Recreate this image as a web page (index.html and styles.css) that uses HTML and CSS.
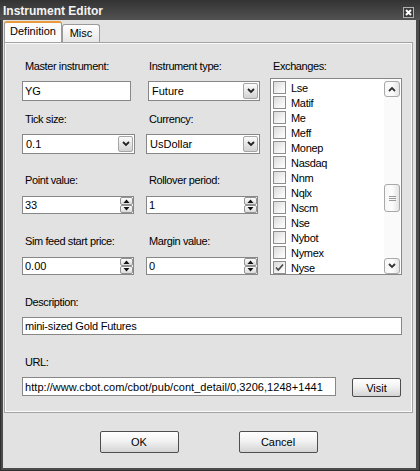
FILE: index.html
```html
<!DOCTYPE html>
<html>
<head>
<meta charset="utf-8">
<title>Instrument Editor</title>
<link rel="stylesheet" href="styles.css">
</head>
<body>
<div class="window">
  <div class="titlebar">
    <span class="title">Instrument Editor</span>
    <span class="close"><svg width="11" height="11" viewBox="0 0 11 11"><rect x="0.5" y="0.5" width="10" height="10" fill="#3a3a3a" stroke="#b0b0b0"/><path d="M3 3 L8 8 M8 3 L3 8" stroke="#fff" stroke-width="2"/></svg></span>
  </div>
  <div class="client">
    <div class="tabs">
      <div class="tab active">Definition</div>
      <div class="tab">Misc</div>
    </div>
    <div class="panel">
      <div class="top">
        <div class="fields">
          <div class="field">
            <div class="lbl">Master instrument:</div>
            <div class="textbox w109 g8">YG</div>
          </div>
          <div class="field">
            <div class="lbl">Instrument type:</div>
            <div class="select w112 g8 shift2"><span class="val">Future</span><span class="drop"><svg width="8" height="6" viewBox="0 0 8 6"><path d="M1 1 L4 4 L7 1" stroke="#222" stroke-width="1.8" fill="none"/></svg></span></div>
          </div>
          <div class="field">
            <div class="lbl">Tick size:</div>
            <div class="select w113 g8"><span class="val">0.1</span><span class="drop"><svg width="8" height="6" viewBox="0 0 8 6"><path d="M1 1 L4 4 L7 1" stroke="#222" stroke-width="1.8" fill="none"/></svg></span></div>
          </div>
          <div class="field">
            <div class="lbl">Currency:</div>
            <div class="select w114 g8"><span class="val">UsDollar</span><span class="drop"><svg width="8" height="6" viewBox="0 0 8 6"><path d="M1 1 L4 4 L7 1" stroke="#222" stroke-width="1.8" fill="none"/></svg></span></div>
          </div>
          <div class="field">
            <div class="lbl">Point value:</div>
            <div class="spin w112 g9"><span class="val">33</span><span class="arrows"><span class="ab"><svg width="7" height="4" viewBox="0 0 7 4"><path d="M0.5 4 L3.5 0.5 L6.5 4 Z" fill="#111"/></svg></span><span class="ab"><svg width="7" height="4" viewBox="0 0 7 4"><path d="M0.5 0 L3.5 3.5 L6.5 0 Z" fill="#111"/></svg></span></span></div>
          </div>
          <div class="field">
            <div class="lbl">Rollover period:</div>
            <div class="spin w112 g9"><span class="val">1</span><span class="arrows"><span class="ab"><svg width="7" height="4" viewBox="0 0 7 4"><path d="M0.5 4 L3.5 0.5 L6.5 4 Z" fill="#111"/></svg></span><span class="ab"><svg width="7" height="4" viewBox="0 0 7 4"><path d="M0.5 0 L3.5 3.5 L6.5 0 Z" fill="#111"/></svg></span></span></div>
          </div>
          <div class="field">
            <div class="lbl">Sim feed start price:</div>
            <div class="spin w112 g9"><span class="val">0.00</span><span class="arrows"><span class="ab"><svg width="7" height="4" viewBox="0 0 7 4"><path d="M0.5 4 L3.5 0.5 L6.5 4 Z" fill="#111"/></svg></span><span class="ab"><svg width="7" height="4" viewBox="0 0 7 4"><path d="M0.5 0 L3.5 3.5 L6.5 0 Z" fill="#111"/></svg></span></span></div>
          </div>
          <div class="field">
            <div class="lbl">Margin value:</div>
            <div class="spin w112 g9"><span class="val">0</span><span class="arrows"><span class="ab"><svg width="7" height="4" viewBox="0 0 7 4"><path d="M0.5 4 L3.5 0.5 L6.5 4 Z" fill="#111"/></svg></span><span class="ab"><svg width="7" height="4" viewBox="0 0 7 4"><path d="M0.5 0 L3.5 3.5 L6.5 0 Z" fill="#111"/></svg></span></span></div>
          </div>
        </div>
        <div class="exchanges">
          <div class="lbl">Exchanges:</div>
          <div class="listbox">
            <div class="items">
              <div class="item"><span class="cb"></span>Lse</div>
              <div class="item"><span class="cb"></span>Matif</div>
              <div class="item"><span class="cb"></span>Me</div>
              <div class="item"><span class="cb"></span>Meff</div>
              <div class="item"><span class="cb"></span>Monep</div>
              <div class="item"><span class="cb"></span>Nasdaq</div>
              <div class="item"><span class="cb"></span>Nnm</div>
              <div class="item"><span class="cb"></span>Nqlx</div>
              <div class="item"><span class="cb"></span>Nscm</div>
              <div class="item"><span class="cb"></span>Nse</div>
              <div class="item"><span class="cb"></span>Nybot</div>
              <div class="item"><span class="cb"></span>Nymex</div>
              <div class="item"><span class="cb checked"><svg width="11" height="11" viewBox="0 0 11 11"><path d="M2 5.5 L4.3 8 L9 2.5" stroke="#4a4a4a" stroke-width="1.7" fill="none"/></svg></span>Nyse</div>
            </div>
            <div class="scrollbar">
              <div class="sb-btn"><svg width="8" height="6" viewBox="0 0 8 6"><path d="M1 5 L4 2 L7 5" stroke="#333" stroke-width="1.8" fill="none"/></svg></div>
              <div class="sb-track"><div class="sb-thumb"><svg width="7" height="7" viewBox="0 0 7 7"><path d="M0 1.5 H7 M0 3.5 H7 M0 5.5 H7" stroke="#9a9a9a" stroke-width="1"/></svg></div></div>
              <div class="sb-btn"><svg width="8" height="6" viewBox="0 0 8 6"><path d="M1 1 L4 4 L7 1" stroke="#333" stroke-width="1.8" fill="none"/></svg></div>
            </div>
          </div>
        </div>
      </div>
      <div class="lbl mt20">Description:</div>
      <div class="textbox desc g8">mini-sized Gold Futures</div>
      <div class="lbl mt20">URL:</div>
      <div class="urlrow">
        <div class="textbox url">http://www.cbot.com/cbot/pub/cont_detail/0,3206,1248+1441</div>
        <div class="btn visit">Visit</div>
      </div>
    </div>
    <div class="buttons">
      <div class="btn big">OK</div>
      <div class="btn big">Cancel</div>
    </div>
  </div>
</div>
</body>
</html>
```

FILE: styles.css
```css
* { box-sizing: border-box; }

body {
  margin: 0;
  font-family: "Liberation Sans", Arial, sans-serif;
  font-size: 11px;
  color: #000;
  background: #4b4b4b;
}

.window {
  width: 420px;
  height: 471px;
  background: #4c4c4c;
  padding: 0 4px 3px 3px;
  display: flex;
  flex-direction: column;
  box-shadow: inset 1px 0 0 #2f2f2f, inset -1px 0 0 #2f2f2f, inset 0 -1px 0 #2f2f2f;
}

.titlebar {
  flex: none;
  height: 20px;
  margin: 0 -4px 0 -3px;
  padding: 0 6px 0 3px;
  display: flex;
  justify-content: space-between;
  background: linear-gradient(#333333, #525252);
}

.title {
  color: #f4f4f4;
  font-weight: bold;
  font-size: 12px;
  line-height: 20px;
  padding-top: 1px;
}

.close {
  display: block;
  width: 11px;
  height: 11px;
  margin-top: 7px;
}

.close svg { display: block; }

.client {
  flex: 1;
  background: #e2e2e2;
  padding: 1px 3px 0 1px;
}

.tabs {
  display: flex;
  align-items: flex-end;
  height: 21px;
}

.tab {
  width: 38px;
  height: 18px;
  border: 1px solid #9a9a9a;
  border-bottom: none;
  border-radius: 3px 3px 0 0;
  background: linear-gradient(#ffffff, #e6e6e6);
  text-align: center;
  line-height: 17px;
}

.tab.active {
  width: 58px;
  height: 21px;
  border-top: 2px solid #e89a3c;
  background: #fbfbfb;
  line-height: 16px;
}

.panel {
  width: 409px;
  height: 371px;
  border: 1px solid #a3a3a3;
  box-shadow: inset 0 0 0 1px #fafafa;
  padding: 16px 0 0 17px;
}

.top { display: flex; }

.fields {
  display: grid;
  grid-template-columns: 124px 124px;
  grid-template-rows: 53px 61px 61px 41px;
}

.lbl {
  height: 14px;
  line-height: 14px;
  padding-left: 3px;
  letter-spacing: -0.4px;
  white-space: nowrap;
}

.mt20 { margin-top: 20px; }
.g8 { margin-top: 8px; }
.g9 { margin-top: 9px; }
.shift2 { margin-left: 2px; }

.w109 { width: 109px; }
.w112 { width: 112px; }
.w113 { width: 113px; }
.w114 { width: 114px; }

.textbox {
  height: 20px;
  border: 1px solid #878787;
  background: #fff;
  padding-left: 2px;
  display: flex;
  align-items: center;
  white-space: nowrap;
  overflow: hidden;
  letter-spacing: -0.2px;
}

.select {
  height: 20px;
  border: 1px solid #878787;
  background: #fff;
  display: flex;
}

.select .val {
  flex: 1;
  padding-left: 3px;
  line-height: 18px;
}

.select .drop {
  width: 15px;
  margin: 1px;
  border: 1px solid #a6a6a6;
  border-radius: 2px;
  background: linear-gradient(#fbfbfb, #e2e2e2 60%, #d2d2d2);
  display: flex;
  align-items: center;
  justify-content: center;
}

.select .drop svg, .sb-btn svg, .ab svg { display: block; }

.spin {
  height: 18px;
  border: 1px solid #878787;
  background: #fff;
  display: flex;
}

.spin .val {
  flex: 1;
  padding-left: 2px;
  line-height: 16px;
}

.arrows {
  width: 13px;
  display: flex;
  flex-direction: column;
}

.ab {
  height: 8px;
  border: 1px solid #929292;
  border-radius: 2px;
  background: linear-gradient(#fdfdfd, #dcdcdc);
  display: flex;
  align-items: center;
  justify-content: center;
}

.exchanges { width: 132px; }

.listbox {
  margin-top: 5px;
  height: 197px;
  border: 1px solid #878787;
  background: #fff;
  display: flex;
}

.items {
  flex: 1;
  padding: 1px 0 0 2px;
}

.item {
  height: 15px;
  display: flex;
  align-items: center;
  gap: 5px;
  letter-spacing: -0.3px;
}

.cb {
  width: 13px;
  height: 13px;
  border: 1px solid #8d8d8d;
  background: linear-gradient(135deg, #dadada, #f6f6f6 70%, #ffffff);
  display: flex;
  align-items: center;
  justify-content: center;
}

.cb svg { display: block; }

.scrollbar {
  width: 16px;
  margin-right: 1px;
  padding-top: 2px;
  display: flex;
  flex-direction: column;
  background: #fafafa;
}

.sb-btn, .sb-thumb {
  height: 16px;
  border: 1px solid #a9a9a9;
  border-radius: 3px;
  background: linear-gradient(90deg, #f6f6f6, #fdfdfd 50%, #e4e4e4);
  display: flex;
  align-items: center;
  justify-content: center;
}

.sb-track { flex: 1; }

.sb-thumb {
  height: 28px;
  margin-top: 87px;
}

.desc {
  width: 380px;
  height: 18px;
}

.urlrow {
  display: flex;
  align-items: flex-start;
  margin-top: 8px;
}

.url {
  width: 314px;
  height: 19px;
  letter-spacing: 0.05px;
}

.btn {
  border: 1px solid #4e4e4e;
  border-radius: 2px;
  background: linear-gradient(#ffffff, #f2f2f2 45%, #d4d4d4);
  display: flex;
  align-items: center;
  justify-content: center;
}

.visit {
  width: 49px;
  height: 19px;
  margin: 1px 0 0 16px;
}

.buttons {
  display: flex;
  justify-content: center;
  gap: 60px;
  margin-top: 18px;
}

.big {
  width: 79px;
  height: 22px;
}
```
